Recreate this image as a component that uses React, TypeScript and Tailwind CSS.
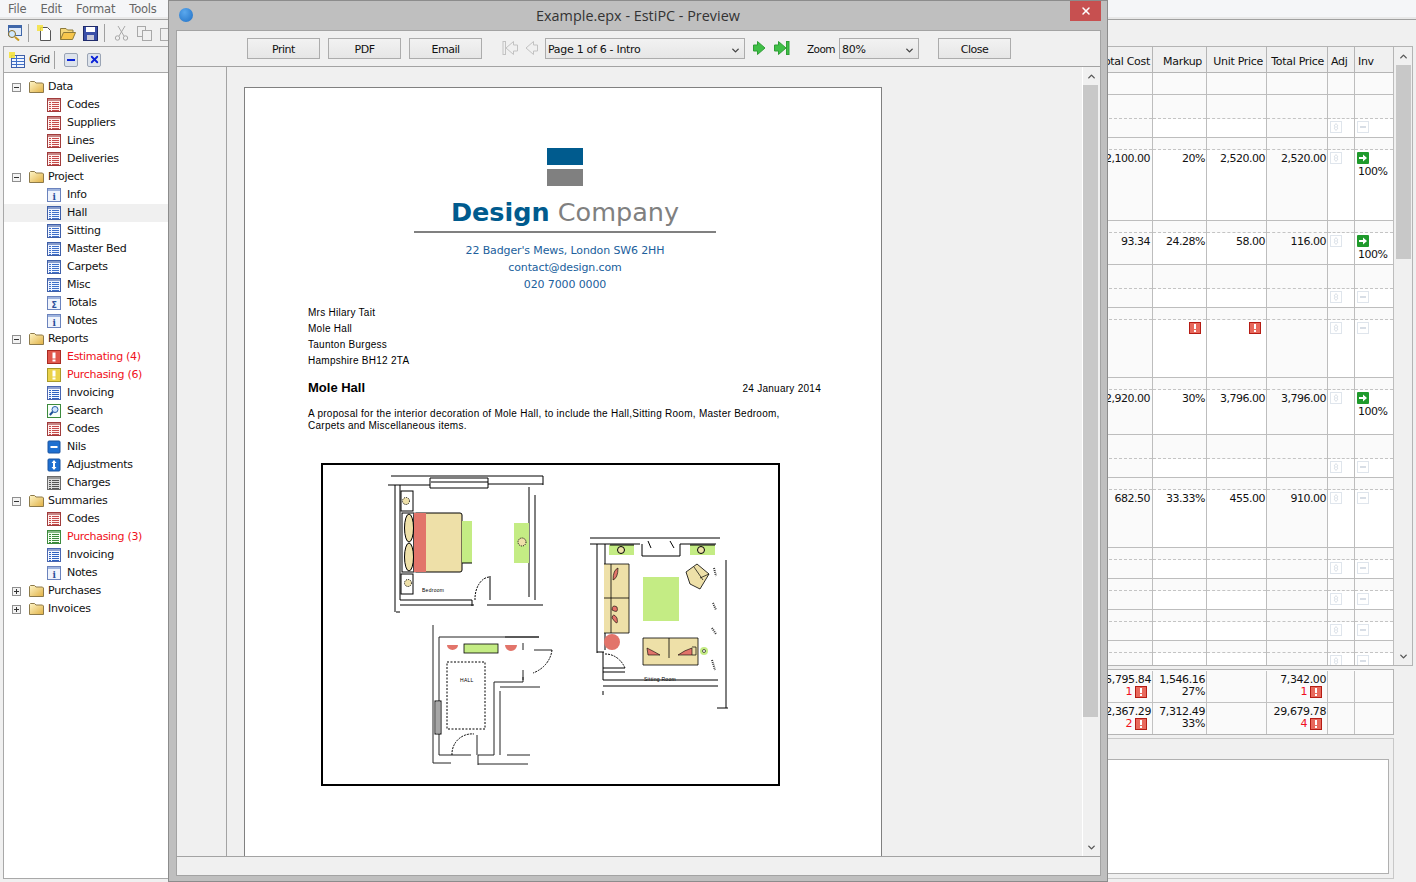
import React from 'react';
import { ChevronDown, ChevronUp, X } from 'lucide-react';

type TreeIconKind =
  | 'red' | 'blue' | 'info' | 'sigma' | 'error' | 'warn' | 'lines'
  | 'search' | 'nils' | 'adjust' | 'gray' | 'green';

interface TreeItem {
  label: string;
  icon?: TreeIconKind;
  alert?: boolean;
  selected?: boolean;
  open?: boolean;
}

const treeItems: TreeItem[] = [
  { label: 'Data', open: true },
  { label: 'Codes', icon: 'red' },
  { label: 'Suppliers', icon: 'red' },
  { label: 'Lines', icon: 'red' },
  { label: 'Deliveries', icon: 'red' },
  { label: 'Project', open: true },
  { label: 'Info', icon: 'info' },
  { label: 'Hall', icon: 'blue', selected: true },
  { label: 'Sitting', icon: 'blue' },
  { label: 'Master Bed', icon: 'blue' },
  { label: 'Carpets', icon: 'blue' },
  { label: 'Misc', icon: 'blue' },
  { label: 'Totals', icon: 'sigma' },
  { label: 'Notes', icon: 'info' },
  { label: 'Reports', open: true },
  { label: 'Estimating (4)', icon: 'error', alert: true },
  { label: 'Purchasing (6)', icon: 'warn', alert: true },
  { label: 'Invoicing', icon: 'lines' },
  { label: 'Search', icon: 'search' },
  { label: 'Codes', icon: 'red' },
  { label: 'Nils', icon: 'nils' },
  { label: 'Adjustments', icon: 'adjust' },
  { label: 'Charges', icon: 'gray' },
  { label: 'Summaries', open: true },
  { label: 'Codes', icon: 'red' },
  { label: 'Purchasing (3)', icon: 'green', alert: true },
  { label: 'Invoicing', icon: 'lines' },
  { label: 'Notes', icon: 'info' },
  { label: 'Purchases', open: false },
  { label: 'Invoices', open: false },
];

interface GridRow {
  h: number;
  top: number;
  cost?: string;
  markup?: string;
  unit?: string;
  total?: string;
  done?: boolean;
  noIcons?: boolean;
  flagged?: boolean;
}

const gridRows: GridRow[] = [
  { h: 22, top: 21, noIcons: true },
  { h: 43, top: 24 },
  { h: 83, top: 12, cost: '2,100.00', markup: '20%', unit: '2,520.00', total: '2,520.00', done: true },
  { h: 44, top: 12, cost: '93.34', markup: '24.28%', unit: '58.00', total: '116.00', done: true },
  { h: 43, top: 24 },
  { h: 70, top: 12, flagged: true },
  { h: 57, top: 12, cost: '2,920.00', markup: '30%', unit: '3,796.00', total: '3,796.00', done: true },
  { h: 43, top: 24 },
  { h: 70, top: 12, cost: '682.50', markup: '33.33%', unit: '455.00', total: '910.00' },
  { h: 31, top: 12 },
  { h: 31, top: 12 },
  { h: 31, top: 12 },
  { h: 24, top: 12 },
];

function Folder() {
  return (
    <svg width="15" height="14" viewBox="0 0 15 14" className="shrink-0">
      <defs>
        <linearGradient id="folderFill" x1="0" y1="0" x2="1" y2="1">
          <stop offset="0" stopColor="#fff6c9" />
          <stop offset="1" stopColor="#e0b043" />
        </linearGradient>
      </defs>
      <path d="M0.5 12.5V2.5L1.5 1.5H5.5L7 3H13.5L14.5 4V12.5Z" fill="url(#folderFill)" stroke="#8d7a4a" />
    </svg>
  );
}

function Expander({ open }: { open?: boolean }) {
  return (
    <div className="relative h-[9px] w-[9px] shrink-0 border border-[#8f8f8f] bg-[#f3f3f3]">
      <div className="absolute left-[1px] top-[3px] h-[1px] w-[5px] bg-[#333]" />
      {!open && <div className="absolute left-[3px] top-[1px] h-[5px] w-[1px] bg-[#333]" />}
    </div>
  );
}

function ListIcon({ stroke, tint, line }: { stroke: string; tint: string; line: string }) {
  return (
    <svg width="14" height="14" viewBox="0 0 14 14" className="shrink-0">
      <rect x="0.5" y="0.5" width="13" height="13" fill={tint} stroke={stroke} />
      <rect x="1" y="1" width="12" height="2" fill={stroke} opacity="0.6" />
      {[4.5, 6.5, 8.5, 10.5, 12.5].map((y) => (
        <path key={y} d={`M2 ${y}H12`} stroke={line} />
      ))}
      <path d="M4.5 4V13" stroke={tint} />
    </svg>
  );
}

function TreeIcon({ kind }: { kind: TreeIconKind }) {
  if (kind === 'red') return <ListIcon stroke="#a13c3c" tint="#fff2f0" line="#c54a4a" />;
  if (kind === 'blue') return <ListIcon stroke="#3f5fa8" tint="#f0f5ff" line="#3f70c8" />;
  if (kind === 'lines') return <ListIcon stroke="#4a66b0" tint="#f5f8ff" line="#2f63c0" />;
  if (kind === 'green') return <ListIcon stroke="#3c8a3c" tint="#f3fff0" line="#3c8a3c" />;
  if (kind === 'gray') return <ListIcon stroke="#6b6b6b" tint="#dddddd" line="#555555" />;
  if (kind === 'info' || kind === 'sigma') {
    return (
      <svg width="14" height="14" viewBox="0 0 14 14" className="shrink-0">
        <rect x="0.5" y="0.5" width="13" height="13" fill="#f0f4fc" stroke="#6b83bd" />
        <rect x="1" y="1" width="12" height="2" fill="#9fb4de" />
        {kind === 'info' ? (
          <text x="7" y="12" textAnchor="middle" fontSize="9" fontWeight="700" fontFamily="DejaVu Serif" fill="#2a4f9a">i</text>
        ) : (
          <text x="7" y="12" textAnchor="middle" fontSize="8" fontWeight="700" fontFamily="DejaVu Sans" fill="#2a4f9a">Σ</text>
        )}
      </svg>
    );
  }
  if (kind === 'error' || kind === 'warn') {
    const bg = kind === 'error' ? '#e0574c' : '#ead24a';
    const edge = kind === 'error' ? '#a82a22' : '#a89a2a';
    return (
      <svg width="14" height="14" viewBox="0 0 14 14" className="shrink-0">
        <rect x="0.5" y="0.5" width="13" height="13" fill={bg} stroke={edge} />
        <rect x="5.5" y="2.5" width="3" height="6" fill="#fff" />
        <rect x="5.5" y="9.5" width="3" height="2" fill="#fff" />
      </svg>
    );
  }
  if (kind === 'search') {
    return (
      <svg width="14" height="14" viewBox="0 0 14 14" className="shrink-0">
        <rect x="0.5" y="0.5" width="13" height="13" fill="#f8fff8" stroke="#3c8a3c" />
        <circle cx="8" cy="5.5" r="3" fill="#cfe4ff" stroke="#2a5fa8" />
        <path d="M5.8 7.8L2.8 11" stroke="#1e4f98" strokeWidth="2" />
      </svg>
    );
  }
  if (kind === 'nils') {
    return (
      <svg width="14" height="14" viewBox="0 0 14 14" className="shrink-0">
        <rect x="1" y="1" width="12" height="12" rx="1" fill="#1e6fd0" stroke="#1a54a0" />
        <rect x="3.5" y="6" width="7" height="2" fill="#fff" />
      </svg>
    );
  }
  return (
    <svg width="14" height="14" viewBox="0 0 14 14" className="shrink-0">
      <rect x="1" y="1" width="12" height="12" rx="1" fill="#1e6fd0" stroke="#1a54a0" />
      <path d="M7 2L9.5 5H8V9H9.5L7 12L4.5 9H6V5H4.5Z" fill="#fff" />
    </svg>
  );
}

function RedFlag() {
  return (
    <div className="flex h-[12px] w-[12px] shrink-0 flex-col items-center justify-center gap-[1px] border border-[#b51c14] bg-[#e8695c]">
      <div className="h-[5px] w-[2px] bg-white" />
      <div className="h-[2px] w-[2px] bg-white" />
    </div>
  );
}

function GreenArrow() {
  return (
    <svg width="12" height="12" viewBox="0 0 12 12" className="shrink-0">
      <rect width="12" height="12" rx="1" fill="#1f9a2c" />
      <path d="M2 5H6V2.5L10 6L6 9.5V7H2Z" fill="#fff" />
    </svg>
  );
}

function FaintAdj() {
  return (
    <svg width="12" height="12" viewBox="0 0 12 12" className="shrink-0">
      <rect x="0.5" y="0.5" width="11" height="11" fill="#fff" stroke="#dfe5ec" />
      <path d="M6 2.5L8 5H7V7H8L6 9.5L4 7H5V5H4Z" fill="none" stroke="#dbe1e8" />
    </svg>
  );
}

function FaintMinus() {
  return (
    <svg width="12" height="12" viewBox="0 0 12 12" className="shrink-0">
      <rect x="0.5" y="0.5" width="11" height="11" fill="#fff" stroke="#dfe5ec" />
      <rect x="3" y="5" width="6" height="2" fill="#d8dee6" />
    </svg>
  );
}

function Cell({ row, className, bottom, children }: { row: GridRow; className: string; bottom: string; children?: React.ReactNode }) {
  const dashed = row.top < row.h - 2;
  return (
    <div className={`flex flex-col border-r border-[#bdbdbd] ${className}`}>
      <div
        style={{ height: row.top }}
        className={`shrink-0 bg-[#fafafa] ${dashed ? 'border-b border-dashed border-[#c4c4c4]' : ''}`}
      />
      <div className={`min-h-0 flex-1 ${bottom}`}>{children}</div>
    </div>
  );
}

function DataGrid() {
  return (
    <div className="flex h-[620px] border border-[#b4b4b4] bg-[#f0f0f0]">
      <div className="flex min-w-0 flex-1 flex-col">
        <div className="flex h-[26px] shrink-0 border-b border-[#b5b5b5] bg-[#f0f0f0] leading-[30px]">
          <div className="flex-1 border-r border-[#b5b5b5] pr-[2px] text-right">Total Cost</div>
          <div className="w-[54px] border-r border-[#b5b5b5] pr-[4px] text-right">Markup</div>
          <div className="w-[60px] border-r border-[#b5b5b5] pr-[3px] text-right">Unit Price</div>
          <div className="w-[61px] border-r border-[#b5b5b5] pr-[3px] text-right">Total Price</div>
          <div className="w-[27px] border-r border-[#b5b5b5] pl-[3px]">Adj</div>
          <div className="w-[39px] border-r border-[#b5b5b5] pl-[3px]">Inv</div>
        </div>
        {gridRows.map((row, i) => (
          <div key={i} style={{ height: row.h }} className="flex shrink-0 overflow-hidden border-b border-[#bdbdbd] tracking-[-0.5px] last:border-b-0">
            <Cell row={row} className="min-w-0 flex-1" bottom="bg-[#fafafa]">
              <div className="pr-[2px] pt-[1px] text-right leading-[16px]">{row.cost}</div>
            </Cell>
            <Cell row={row} className="w-[54px]" bottom="bg-white">
              {row.flagged ? (
                <div className="flex justify-end pr-[5px] pt-[2px]"><RedFlag /></div>
              ) : (
                <div className="pr-[1px] pt-[1px] text-right leading-[16px]">{row.markup}</div>
              )}
            </Cell>
            <Cell row={row} className="w-[60px]" bottom="bg-white">
              {row.flagged ? (
                <div className="flex justify-end pr-[5px] pt-[2px]"><RedFlag /></div>
              ) : (
                <div className="pr-[1px] pt-[1px] text-right leading-[16px]">{row.unit}</div>
              )}
            </Cell>
            <Cell row={row} className="w-[61px]" bottom="bg-[#fafafa]">
              <div className="pr-[1px] pt-[1px] text-right leading-[16px]">{row.total}</div>
            </Cell>
            <Cell row={row} className="w-[27px]" bottom="bg-white">
              {!row.noIcons && <div className="pl-[2px] pt-[2px]"><FaintAdj /></div>}
            </Cell>
            <Cell row={row} className="w-[39px]" bottom="bg-white">
              {!row.noIcons && (
                <div className="pl-[2px] pt-[2px]">
                  {row.done ? <GreenArrow /> : <FaintMinus />}
                  {row.done && <div className="pl-[1px] pt-[1px] leading-[14px]">100%</div>}
                </div>
              )}
            </Cell>
          </div>
        ))}
      </div>
      <div className="flex w-[18px] shrink-0 flex-col items-center bg-[#f0f0f0]">
        <div className="flex h-[18px] items-center justify-center">
          <ChevronUp size={11} strokeWidth={3} className="text-[#555]" />
        </div>
        <div className="h-[194px] w-[15px] bg-[#c8c8c8]" />
        <div className="flex-1" />
        <div className="flex h-[18px] items-center justify-center">
          <ChevronDown size={11} strokeWidth={3} className="text-[#555]" />
        </div>
      </div>
    </div>
  );
}

function TotalsRow({ cost, costFlag, markup, pct, total, totalFlag }: { cost: string; costFlag: string; markup: string; pct: string; total: string; totalFlag: string }) {
  return (
    <div className="flex h-[31px] leading-[12px] tracking-[-0.4px]">
      <div className="min-w-0 flex-1 border-r border-[#c2c2c2] pr-[1px] pt-[3px] text-right">
        <div>{cost}</div>
        <div className="flex items-center justify-end gap-[3px] text-[#f01020]">{costFlag}<div className="mr-[4px]"><RedFlag /></div></div>
      </div>
      <div className="w-[54px] border-r border-[#c2c2c2] pr-[1px] pt-[3px] text-right">
        <div>{markup}</div>
        <div>{pct}</div>
      </div>
      <div className="w-[60px] border-r border-[#c2c2c2]" />
      <div className="w-[61px] border-r border-[#c2c2c2] pr-[1px] pt-[3px] text-right">
        <div>{total}</div>
        <div className="flex items-center justify-end gap-[3px] text-[#f01020]">{totalFlag}<div className="mr-[4px]"><RedFlag /></div></div>
      </div>
      <div className="w-[27px] border-r border-[#c2c2c2]" />
      <div className="w-[38px]" />
    </div>
  );
}

function FloorPlan() {
  const bed = '#eee0a8';
  const green = '#c4ec84';
  const red = '#e2746a';
  return (
    <svg viewBox="323 465 455 319" width="455" height="319" className="block" fill="none" stroke="#000" strokeWidth="1">
      {/* bedroom */}
      <path d="M391 476H543M430 478H488V488H430ZM431 482H488M388 485H430M488 484H529M395 485V612M400 485V600M400 600H472V606M400 605H474M529 487V597M535 495V600M543 476V485M529 484H543M490 600V576M487 605H543M396 612H400" />
      <path d="M475 600A15 22 0 0 1 490 577" strokeDasharray="2 1" />
      <rect x="401" y="491" width="12" height="20" fill="#fff" />
      <circle cx="406" cy="501" r="3.5" fill={bed} strokeDasharray="1 1" />
      <rect x="401" y="574" width="12" height="20" fill="#fff" />
      <circle cx="408" cy="583" r="3.5" fill={bed} strokeDasharray="1 1" />
      <rect x="402" y="513" width="12" height="59" fill="#fff" />
      <ellipse cx="409" cy="528" rx="4.5" ry="14" fill={bed} />
      <ellipse cx="409" cy="557" rx="4.5" ry="14" fill={bed} />
      <rect x="414" y="513" width="48" height="59" rx="2" fill={bed} />
      <rect x="414" y="513" width="12" height="59" fill={red} stroke="none" />
      <rect x="462" y="521" width="10" height="42" fill={green} stroke="none" />
      <path d="M462 563H472" />
      <rect x="514" y="523" width="15" height="40" fill={green} stroke="none" />
      <circle cx="522" cy="542" r="4" fill={bed} strokeDasharray="1 1" />
      <text x="422" y="592" fontSize="5" fontFamily="Liberation Sans" fill="#000" stroke="none">Bedroom</text>

      {/* sitting room */}
      <path d="M590 538H720M590 544H640M680 544H716M597 544V653M605 544V650M597 652H604M603 652V680M603 668H625M603 672H625M603 686H718M603 691V695M603 680H718M726 560V708M717 708H728M642 544V556H680V544M648 541L651 548M670 541L674 548" />
      <path d="M605 654A22 26 0 0 1 625 668" strokeDasharray="2 1" />
      <rect x="609" y="545" width="25" height="10" fill={green} stroke="none" />
      <rect x="690" y="545" width="25" height="10" fill={green} stroke="none" />
      <circle cx="621" cy="550" r="3.5" fill={bed} />
      <circle cx="701" cy="550" r="3.5" fill={bed} />
      <path d="M610 545H634M690 545H715" />
      <rect x="604" y="564" width="25" height="69" fill={bed} stroke="none" />
      <path d="M604 564H629V633H604M611 564V633M604 598H629" stroke="#000" strokeWidth="0.8" />
      <path d="M613 580Q613 570 618 568Q618 578 613 580ZM612 610Q612 604 617 607Q619 614 612 610ZM612 618Q613 612 617 618Q619 628 612 618Z" fill={red} stroke="#000" strokeWidth="0.6" />
      <rect x="643" y="577" width="36" height="44" fill={green} stroke="none" />
      <circle cx="612" cy="642" r="8" fill={red} stroke="none" />
      <rect x="643" y="638" width="55" height="27" fill={bed} stroke="none" />
      <path d="M643 638H698V665H643ZM669 638V658" strokeWidth="0.8" />
      <path d="M647 648Q655 652 660 655H648ZM678 655Q685 650 692 648V655Z" fill={red} stroke="#000" strokeWidth="0.6" />
      <path d="M692 647H696V655H692" strokeWidth="0.7" />
      <circle cx="704" cy="651" r="4" fill={green} stroke="none" />
      <circle cx="704" cy="651" r="1.5" fill="#fff" strokeWidth="0.6" />
      <path d="M686 572L697 564L709 574L700 589L690 584Z" fill={bed} strokeWidth="0.8" />
      <path d="M694 567L703 580M709 574L700 578" strokeWidth="0.7" />
      <path d="M714 568L716 576M713 603L716 610M712 628L716 634M712 660L715 670" strokeDasharray="1 1" stroke="#333" strokeWidth="2" />
      <text x="644" y="681" fontSize="5" fontFamily="Liberation Sans" fill="#000" stroke="none">Sitting Room</text>

      {/* hall */}
      <path d="M433 625V763H451M439 637V755H471M439 637H539M505 637H539M534 650H552M523 643V650M523 670V680M494 682H523V677M494 682V755H478V765M500 687H540M500 691V755M478 764H528M507 755H530M477 735V755" stroke="#222" />
      <path d="M552 650A30 28 0 0 1 533 673" strokeDasharray="2 1" />
      <path d="M452 755A20 20 0 0 1 474 734" strokeDasharray="2 1" />
      <rect x="435" y="701" width="6" height="33" fill="#fff" />
      <path d="M437 702V733M439 702V733" strokeWidth="0.7" />
      <rect x="447" y="662" width="38" height="67" strokeDasharray="2 1.5" />
      <rect x="464" y="644" width="34" height="9" fill={green} strokeWidth="0.8" />
      <path d="M447 645H458A5.5 5 0 0 1 447 645ZM505 645H517A6 6 0 0 1 505 645Z" fill={red} stroke="none" />
      <text x="460" y="682" fontSize="5" fontFamily="Liberation Sans" fill="#000" stroke="none">HALL</text>
    </svg>
  );
}

function DialogButton({ label }: { label: string }) {
  return (
    <div className="flex h-[21px] w-[73px] shrink-0 items-center justify-center border border-[#acacac] bg-linear-to-b from-[#f2f2f2] to-[#e6e6e6] pt-[4px] tracking-[-0.5px]">
      {label}
    </div>
  );
}

function DropDown({ label, className }: { label: string; className: string }) {
  return (
    <div className={`flex h-[21px] shrink-0 items-center justify-between border border-[#acacac] bg-linear-to-b from-[#f2f2f2] to-[#e6e6e6] pl-[2px] pr-[3px] pt-[4px] ${className}`}>
      <span>{label}</span>
      <ChevronDown size={11} strokeWidth={3} className="text-[#444]" />
    </div>
  );
}

function NavArrow({ dir, bar, active }: { dir: 'left' | 'right'; bar?: boolean; active?: boolean }) {
  const fill = active ? '#3fbf46' : '#f0f0f0';
  const stroke = active ? '#2f9d36' : '#c2c2c2';
  const width = bar ? 16 : 14;
  return (
    <svg width={width} height="16" viewBox={`0 0 ${width} 16`} className="shrink-0">
      {dir === 'right' ? (
        <>
          <path d="M0.5 5H4.5V1.5L12 8L4.5 14.5V11H0.5Z" fill={fill} stroke={stroke} />
          {bar && <rect x="12.5" y="1.5" width="2.5" height="13" fill={fill} stroke={stroke} />}
        </>
      ) : (
        <g transform={`translate(${width} 0) scale(-1 1)`}>
          <path d="M0.5 5H4.5V1.5L12 8L4.5 14.5V11H0.5Z" fill={fill} stroke={stroke} />
          {bar && <rect x="12.5" y="1.5" width="2.5" height="13" fill={fill} stroke={stroke} />}
        </g>
      )}
    </svg>
  );
}

function PreviewDialog() {
  return (
    <div className="absolute left-[168px] top-0 flex h-[882px] w-[940px] flex-col border border-[#8c8c8c] bg-[#bfbfbf]">
      <div className="relative flex h-[29px] shrink-0 items-center justify-center">
        <div className="absolute left-[10px] top-[7px] h-[14px] w-[14px] rounded-full bg-radial-[at_40%_30%] from-[#5aa8ee] to-[#1f6fc4]" />
        <span className="font-['Open_Sans',sans-serif] text-[14.4px] tracking-normal text-[#333]">Example.epx - EstiPC - Preview</span>
        <div className="absolute right-[6px] top-0 flex h-[20px] w-[31px] items-center justify-center bg-[#c75050]">
          <X size={12} strokeWidth={3} className="text-white" />
        </div>
      </div>
      <div className="mb-[5px] ml-[7px] mr-[6px] flex min-h-0 flex-1 flex-col border border-[#a3a3a3] bg-[#f0f0f0]">
        <div className="flex h-[36px] shrink-0 items-center border-b border-[#a3a3a3] pb-[1px] pl-[70px]">
          <DialogButton label="Print" />
          <div className="w-[8px]" />
          <DialogButton label="PDF" />
          <div className="w-[8px]" />
          <DialogButton label="Email" />
          <div className="w-[20px]" />
          <NavArrow dir="left" bar />
          <div className="w-[6px]" />
          <NavArrow dir="left" />
          <div className="w-[7px]" />
          <DropDown label="Page 1 of 6 - Intro" className="w-[200px]" />
          <div className="w-[8px]" />
          <NavArrow dir="right" active />
          <div className="w-[7px]" />
          <NavArrow dir="right" bar active />
          <div className="w-[17px]" />
          <span className="w-[26px] whitespace-nowrap pt-[4px] text-[10.5px] tracking-[-0.6px]">Zoom</span>
          <div className="w-[6px]" />
          <DropDown label="80%" className="w-[80px]" />
          <div className="w-[19px]" />
          <DialogButton label="Close" />
        </div>
        <div className="flex min-h-0 flex-1">
          <div className="w-[50px] shrink-0 border-r border-[#a3a3a3]" />
          <div className="min-w-0 flex-1 overflow-hidden pl-[17px] pt-[20px]">
            <PreviewPage />
          </div>
          <div className="flex w-[18px] shrink-0 flex-col border-l border-white">
            <div className="flex h-[18px] w-[16px] items-center justify-center">
              <ChevronUp size={11} strokeWidth={3} className="text-[#555]" />
            </div>
            <div className="h-[632px] w-[15px] bg-[#c8c8c8]" />
            <div className="flex-1" />
            <div className="flex h-[18px] w-[16px] items-center justify-center">
              <ChevronDown size={11} strokeWidth={3} className="text-[#555]" />
            </div>
          </div>
        </div>
        <div className="h-[19px] shrink-0 border-t border-[#a3a3a3]" />
      </div>
    </div>
  );
}

function PreviewPage() {
  return (
    <div className="h-[900px] w-[638px] border border-[#808080] bg-white pl-[63px] pt-[60px] font-['Liberation_Sans',sans-serif] text-[10px] tracking-[0.27px] text-black">
      <div className="-ml-[59px] flex flex-col items-center tracking-normal">
        <div className="h-[17px] w-[36px] bg-[#005b8e]" />
        <div className="mt-[4px] h-[17px] w-[36px] bg-[#808080]" />
        <div className="mt-[8px] h-[36px] whitespace-nowrap font-['DejaVu_Sans',sans-serif] text-[25.5px] leading-[36px] text-[#808080]">
          <span className="font-bold text-[#005b8e]">Design</span> Company
        </div>
        <div className="mt-[1px] h-[2px] w-[302px] bg-[#808080]" />
        <div className="mt-[9px] text-center font-['DejaVu_Sans',sans-serif] text-[11px] leading-[17px] tracking-[-0.13px] text-[#20609c]">
          <div>22 Badger's Mews, London SW6 2HH</div>
          <div>contact@design.com</div>
          <div>020 7000 0000</div>
        </div>
      </div>
      <div className="mt-[12px] leading-[16px]">
        <div>Mrs Hilary Tait</div>
        <div>Mole Hall</div>
        <div>Taunton Burgess</div>
        <div>Hampshire BH12 2TA</div>
      </div>
      <div className="mt-[10px] flex w-[513px] items-center justify-between">
        <span className="text-[13px] font-bold leading-[18px] tracking-normal">Mole Hall</span>
        <span>24 January 2014</span>
      </div>
      <div className="mt-[11px] w-[490px] leading-[12px]">
        A proposal for the interior decoration of Mole Hall, to include the Hall,Sitting Room, Master Bedroom, Carpets and Miscellaneous items.
      </div>
      <div className="ml-[13px] mt-[31px] h-[323px] w-[459px] border-2 border-black">
        <FloorPlan />
      </div>
    </div>
  );
}

function ToolbarIcons() {
  return (
    <div className="flex h-[27px] items-center border-t border-[#a0a0a0] pl-[6px]">
      <svg width="16" height="16" viewBox="0 0 16 16" className="shrink-0">
        <rect x="2.5" y="0.5" width="13" height="10" fill="#dfe9f8" stroke="#3f66a8" />
        <rect x="3" y="1" width="12" height="2" fill="#3f66a8" />
        <circle cx="6" cy="9" r="3.5" fill="#cfe8ff" stroke="#8a6a20" />
        <path d="M9 12L13 15.5" stroke="#c89a20" strokeWidth="2" />
      </svg>
      <div className="mx-[6px] h-[18px] w-[1px] bg-[#a0a0a0]" />
      <svg width="16" height="16" viewBox="0 0 16 16" className="ml-[2px] shrink-0">
        <path d="M3.5 2.5H10.5L13.5 5.5V15.5H3.5Z" fill="#fff" stroke="#555" />
        <rect x="0" y="0" width="6" height="6" fill="#f4e23c" opacity="0.85" />
      </svg>
      <svg width="16" height="16" viewBox="0 0 16 16" className="ml-[7px] shrink-0">
        <path d="M0.5 14.5V3.5H6L7.5 5H13V7" fill="#f4d77a" stroke="#8d7a3a" />
        <path d="M0.5 14.5L3.5 7.5H15.5L12.5 14.5Z" fill="#f7c64c" stroke="#8d7a3a" />
      </svg>
      <svg width="15" height="15" viewBox="0 0 15 15" className="ml-[7px] shrink-0">
        <rect x="0.5" y="0.5" width="14" height="14" fill="#3a4fa8" stroke="#1f2a6a" />
        <rect x="3" y="1" width="9" height="5" fill="#fff" />
        <rect x="4" y="9" width="7" height="5" fill="#c8c8d8" />
      </svg>
      <div className="mx-[6px] h-[18px] w-[1px] bg-[#a0a0a0]" />
      <svg width="15" height="16" viewBox="0 0 15 16" fill="none" stroke="#a8a8a8" className="ml-[3px] shrink-0">
        <path d="M4 1L10 11M11 1L5 11" />
        <circle cx="3.5" cy="13" r="2.2" />
        <circle cx="11.5" cy="13" r="2.2" />
      </svg>
      <svg width="15" height="15" viewBox="0 0 15 15" fill="#f0f0f0" stroke="#a8a8a8" className="ml-[8px] shrink-0">
        <rect x="0.5" y="0.5" width="8" height="10" />
        <rect x="5.5" y="4.5" width="9" height="10" />
      </svg>
      <svg width="15" height="15" viewBox="0 0 15 15" fill="#f0f0f0" stroke="#a8a8a8" className="ml-[8px] shrink-0">
        <rect x="0.5" y="2.5" width="11" height="12" />
      </svg>
    </div>
  );
}

function TreePanel() {
  return (
    <div className="ml-[3px] flex h-[833px] w-[165px] shrink-0 flex-col border-b border-l border-t border-[#a8a8a8] bg-white">
      <div className="flex h-[26px] shrink-0 items-center border-b border-[#a8a8a8] bg-[#f0f0f0] pl-[5px]">
        <svg width="16" height="16" viewBox="0 0 16 16" className="shrink-0">
          <rect x="2.5" y="3.5" width="13" height="12" fill="#f0f5ff" stroke="#3f5fa8" />
          <path d="M3 6.5H15M3 9.5H15M3 12.5H15M7.5 4V15" stroke="#3f70c8" />
          <rect x="0" y="0" width="6" height="6" fill="#f4e23c" opacity="0.9" />
        </svg>
        <span className="ml-[4px] w-[19px] pt-[2px] tracking-[-0.6px]">Grid</span>
        <div className="mx-[6px] h-[18px] w-[1px] bg-[#a0a0a0]" />
        <div className="ml-[3px] flex h-[14px] w-[14px] items-center justify-center rounded-[2px] border border-[#9aa4b4] bg-[#dde3ec]">
          <div className="h-[2px] w-[8px] bg-[#0a22d8]" />
        </div>
        <div className="ml-[9px] flex h-[14px] w-[14px] items-center justify-center rounded-[2px] border border-[#9aa4b4] bg-[#dde3ec]">
          <X size={11} strokeWidth={4} className="text-[#0a22d8]" />
        </div>
      </div>
      <div className="pt-[5px]">
        {treeItems.map((item, i) => (
          <div key={i} className={`flex h-[18px] items-center whitespace-nowrap ${item.selected ? 'bg-[#f0f0f0]' : ''} ${item.icon ? 'pl-[43px]' : 'pl-[8px]'} ${item.alert ? 'text-[#f01020]' : ''}`}>
            {item.icon ? (
              <>
                <TreeIcon kind={item.icon} />
                <span className="ml-[6px]">{item.label}</span>
              </>
            ) : (
              <>
                <Expander open={item.open} />
                <div className="ml-[8px]"><Folder /></div>
                <span className="ml-[4px]">{item.label}</span>
              </>
            )}
          </div>
        ))}
      </div>
    </div>
  );
}

export default function App() {
  return (
    <div className="relative h-[882px] w-[1416px] overflow-hidden bg-[#f0f0f0] font-['DejaVu_Sans',sans-serif] text-[11px] tracking-[-0.3px] text-[#111]">
      <div className="flex h-[19px] items-center gap-[14px] border-b-2 border-[#e8e8e8] bg-[#f5f6f8] pl-[8px] pt-[3px] text-[11.5px] tracking-[-0.2px] text-[#666]">
        <span>File</span>
        <span>Edit</span>
        <span>Format</span>
        <span>Tools</span>
      </div>
      <ToolbarIcons />
      <div className="flex">
        <TreePanel />
        <div className="min-w-0 flex-1 pr-[3px]">
          <DataGrid />
          <div className="mr-[19px] mt-[3px] h-[66px] border border-[#b4b4b4] bg-[#fafafa] py-[1px]">
            <TotalsRow cost="5,795.84" costFlag="1" markup="1,546.16" pct="27%" total="7,342.00" totalFlag="1" />
            <div className="h-[1px] bg-[#c2c2c2]" />
            <TotalsRow cost="2,367.29" costFlag="2" markup="7,312.49" pct="33%" total="29,679.78" totalFlag="4" />
          </div>
          <div className="mr-[19px] mt-[3px] h-[141px] border border-[#c8c8c8] bg-[#f0f0f0] pb-[4px] pr-[4px] pt-[20px]">
            <div className="h-full border border-[#b0b0b0] bg-white" />
          </div>
        </div>
      </div>
      <PreviewDialog />
    </div>
  );
}
